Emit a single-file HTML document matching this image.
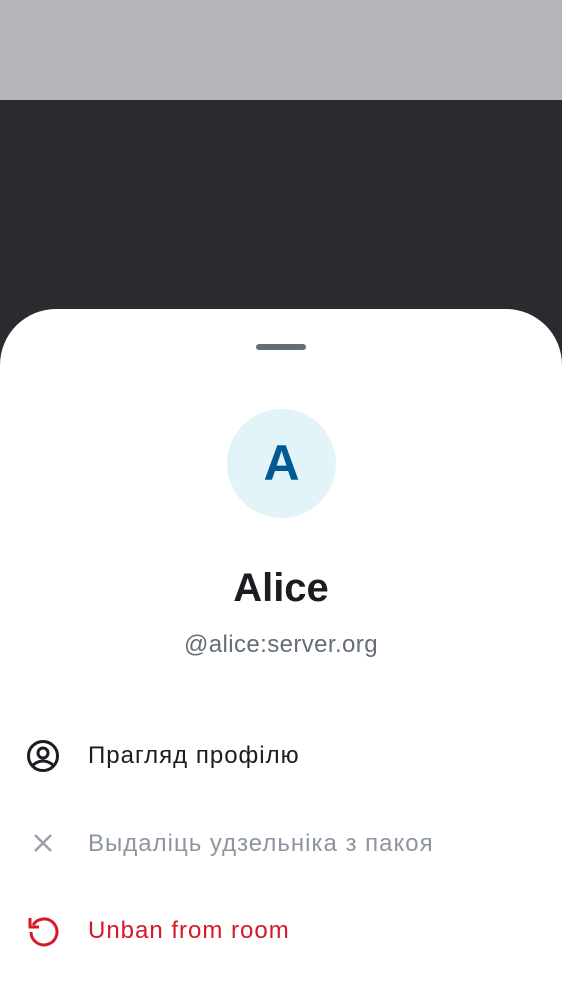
<!DOCTYPE html>
<html><head><meta charset="utf-8"><style>
*{margin:0;padding:0;box-sizing:border-box}
body{width:562px;height:1000px;overflow:hidden;background:#2a2b2e;font-family:"Liberation Sans",sans-serif;position:relative}
.top{position:absolute;left:0;top:0;width:562px;height:100px;background:#b4b5b8}
.sheet{position:absolute;left:0;top:309px;width:562px;height:691px;background:#fff;border-radius:56px 56px 0 0}
.handle{position:absolute;left:256px;top:344px;width:50px;height:6px;border-radius:3px;background:#656d77}
.av{position:absolute;left:227px;top:409px;width:109px;height:109px;border-radius:50%;background:#e2f4f8;color:#005a96;font-weight:bold;font-size:50px;text-align:center;line-height:109px}
.name{position:absolute;left:0;width:562px;top:566px;text-align:center;font-size:40px;font-weight:bold;color:#1b1d22}
.id{position:absolute;left:0;width:562px;top:631px;text-align:center;font-size:24px;color:#656d77;letter-spacing:0.4px}
.row{position:absolute;left:88px;font-size:24px;letter-spacing:1px}
svg{position:absolute}
</style></head><body>
<div class="top"></div>
<div class="sheet"></div>
<div class="handle"></div>
<div class="av">A</div>
<div class="name">Alice</div>
<div class="id">@alice:server.org</div>
<svg style="left:26px;top:739px" width="34" height="34" viewBox="0 0 34 34"><circle cx="17" cy="17" r="14.5" fill="none" stroke="#1b1d22" stroke-width="3"/><circle cx="17" cy="14" r="5" fill="none" stroke="#1b1d22" stroke-width="3"/><path d="M7 26 Q17 18 27 26" fill="none" stroke="#1b1d22" stroke-width="3"/></svg>
<div class="row" style="top:742px;color:#1b1d22">Прагляд профілю</div>
<svg style="left:32px;top:832px" width="22" height="22" viewBox="0 0 22 22"><path d="M3 3L19 19M19 3L3 19" stroke="#9aa1ab" stroke-width="2.6"/></svg>
<div class="row" style="top:830px;color:#8d95a0">Выдаліць удзельніка з пакоя</div>
<svg style="left:26px;top:913px" width="36" height="36" viewBox="0 0 36 36"><path d="M7 12 A13 13 0 1 1 5 19" fill="none" stroke="#d51928" stroke-width="3"/><path d="M4 5 V14 H13" fill="none" stroke="#d51928" stroke-width="3"/></svg>
<div class="row" style="top:917px;color:#d51928">Unban from room</div>
</body></html>
